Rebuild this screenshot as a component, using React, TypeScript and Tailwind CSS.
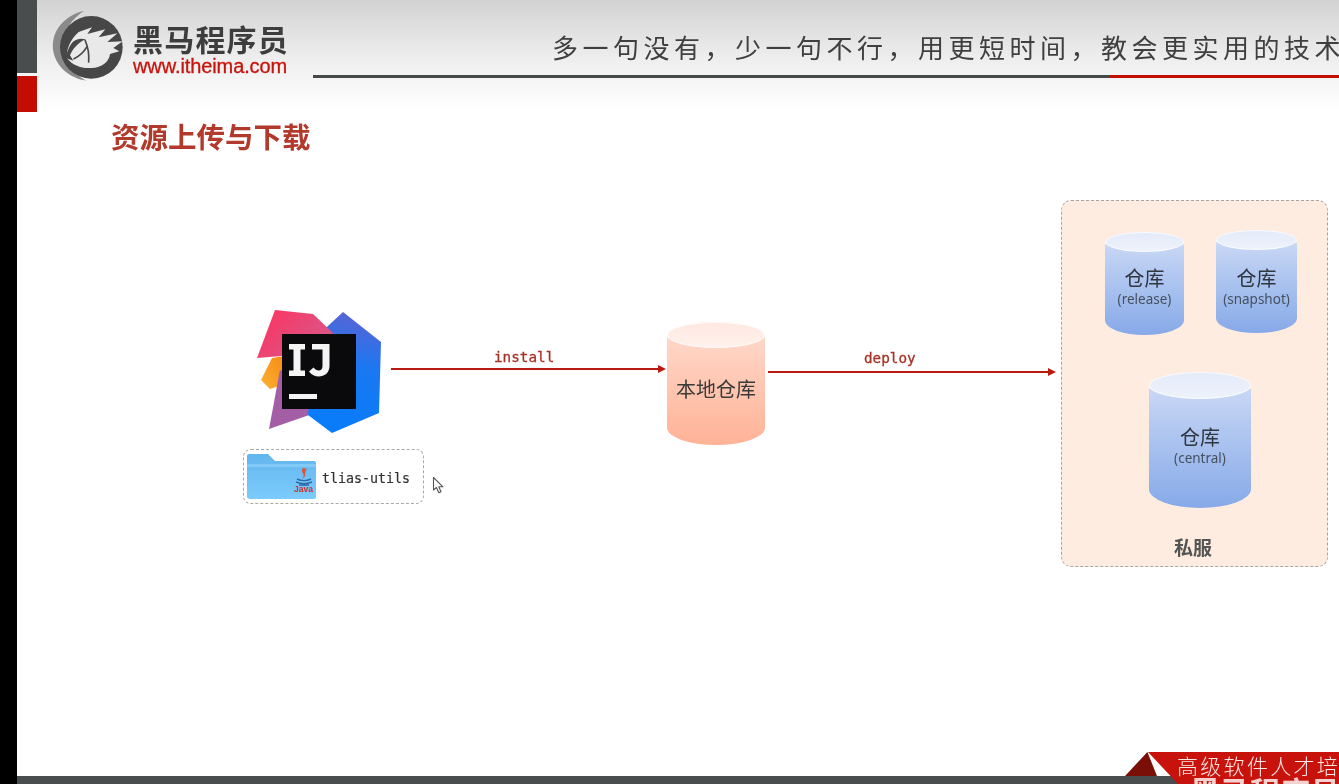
import React from 'react';

const cjkSans = "font-['Noto_Sans_CJK_SC','Noto_Sans',sans-serif]";
const mono = "font-['DejaVu_Sans_Mono','Liberation_Mono',monospace]";

type CylinderProps = {
  className: string;
  topClass: string;
  body: string;
  children: React.ReactNode;
};

const Cylinder = ({ className, topClass, body, children }: CylinderProps) => (
  <div className={`absolute rounded-[50%/14%] ${body} ${className}`}>
    <div className={`absolute left-0 top-0 w-full rounded-[50%] border border-white/80 ${topClass}`}></div>
    <div className="relative flex h-full w-full flex-col items-center justify-center">{children}</div>
  </div>
);

const RepoLabel = ({ sub, pad }: { sub: string; pad: string }) => (
  <div className={`flex flex-col items-center ${pad}`}>
    <div className={`${cjkSans} text-[20px] leading-[24px] text-[#2f3640]`}>仓库</div>
    <div className="font-['Noto_Sans',sans-serif] text-[13.5px] leading-[18px] text-[#46505f]">{sub}</div>
  </div>
);

const Arrow = ({ className }: { className: string }) => (
  <div className={`absolute flex items-center ${className}`}>
    <div className="h-[2px] flex-1 bg-[#b81a10]"></div>
    <div className="h-0 w-0 border-y-[4px] border-l-[8px] border-y-transparent border-l-[#b81a10]"></div>
  </div>
);

const HorseLogo = () => (
  <svg width="84" height="76" viewBox="0 0 252 228" className="shrink-0">
    <path d="M108 8 C50 22 6 70 16 130 C24 176 66 212 116 218 C70 194 38 152 42 110 C46 68 72 32 108 8Z" fill="#8a8a8a" />
    <circle cx="130" cy="118" r="94" fill="#474747" />
    <path d="M56 150 C56 122 66 96 92 72 L132 58 L118 78 L172 64 L152 88 L208 76 L178 102 L224 100 L196 120 L214 130 L186 138 C184 160 162 180 130 180 C100 182 74 172 56 150Z" fill="#e9e9e9" />
    <path d="M72 104 C62 118 56 134 52 150 L76 158 L66 142 C74 124 88 106 112 94 C98 90 82 94 72 104Z" fill="#474747" />
    <path d="M111 96 C119 114 124 136 122 162 M117 116 C109 130 96 144 78 152" stroke="#474747" strokeWidth="5" fill="none" strokeLinecap="round" />
  </svg>
);

const IdeaLogo = () => (
  <svg className="absolute left-[255px] top-[308px]" width="128" height="128" viewBox="0 0 128 128">
    <defs>
      <linearGradient id="ij-blue" x1="0.55" y1="1" x2="0.7" y2="0">
        <stop offset="0" stopColor="#087cfa" />
        <stop offset="0.55" stopColor="#1a78f2" />
        <stop offset="1" stopColor="#5b63d3" />
      </linearGradient>
      <linearGradient id="ij-red" x1="0" y1="0" x2="1" y2="0.6">
        <stop offset="0" stopColor="#fe315d" />
        <stop offset="1" stopColor="#d9588a" />
      </linearGradient>
      <linearGradient id="ij-orange" x1="0" y1="1" x2="1" y2="0">
        <stop offset="0" stopColor="#f9b233" />
        <stop offset="1" stopColor="#f98a12" />
      </linearGradient>
    </defs>
    <path d="M17 50 L6 72 L15 81 L30 76 L30 48Z" fill="url(#ij-orange)" />
    <path d="M25 62 L14 121 L60 105 L42 70Z" fill="#a35ea5" />
    <path d="M88 4 L126 34 L124 105 L77 125 L53 107 L60 30Z" fill="url(#ij-blue)" />
    <path d="M20 2 L58 6 L78 25 L60 50 L27 48 L2 50Z" fill="url(#ij-red)" />
    <rect x="27" y="26" width="74" height="75" fill="#0a0a0c" />
    <path d="M34 36 H50 V41.500 H45.500 V62.500 H50 V68 H34 V62.500 H38.500 V41.500 H34Z" fill="#f4f4f4" />
    <path d="M57 36 H74.500 V58 C74.500 65 69 68.500 64 68.500 C60 68.500 56.500 67 54 63.500 L58.500 59.500 C60 61.500 62 62.500 63.500 62.500 C66 62.500 67.500 61 67.500 58 V41.500 H57Z" fill="#f4f4f4" />
    <rect x="34" y="86" width="28" height="5" fill="#f4f4f4" />
  </svg>
);

const JavaFolder = () => (
  <div className="relative h-[45px] w-[69px] shrink-0">
    <svg width="69" height="45" viewBox="0 0 69 45" className="absolute left-0 top-0">
      <defs>
        <linearGradient id="folder" x1="0" y1="0" x2="0" y2="1">
          <stop offset="0" stopColor="#62b6ee" />
          <stop offset="1" stopColor="#7ccbfc" />
        </linearGradient>
      </defs>
      <path d="M2 0 H21 L28 7 H67 Q69 7 69 9 V43 Q69 45 67 45 H3 Q0 45 0 42 V2 Q0 0 2 0Z" fill="url(#folder)" />
      <path d="M0 10 H69 V13 H0Z" fill="#a3dcff" fillOpacity="0.45" />
      <path d="M56 14 C52 18 60 20 55 25 C61 22 56 19 60 15Z" fill="#d8563f" />
      <path d="M50 25 C54 27 60 27 64 25 M49 28 C54 30 60 30 65 28 M52 31 H62" stroke="#2f6aa8" strokeWidth="1.4" fill="none" />
    </svg>
    <span className="absolute bottom-[5px] right-[3px] font-['Liberation_Sans',sans-serif] text-[8.5px] font-bold leading-[9px] text-[#c8302a]">Java</span>
  </div>
);

const App = () => {
  return (
    <div className="relative flex h-[784px] w-[1339px] overflow-hidden bg-white blur-[0.4px]">
      <div className="w-[17px] shrink-0 bg-black"></div>

      <div className="flex min-w-0 flex-1 flex-col">
        <header className="flex h-[112px] shrink-0 bg-gradient-to-b from-[#d2d2d2] via-[#ededed] to-white">
          <div className="flex w-[20px] shrink-0 flex-col">
            <div className="h-[73px] bg-[#4a4d4e]"></div>
            <div className="mt-[3px] h-[36px] bg-[#c30d00]"></div>
          </div>
          <div className="flex h-[92px] w-[276px] shrink-0 items-center pl-[11px]">
            <HorseLogo />
            <div className="ml-[1px] flex flex-col pt-[4px]">
              <div className={`${cjkSans} text-[30px] font-bold leading-[36px] tracking-[1.2px] text-[#3d3d3d]`}>黑马程序员</div>
              <div className="font-['Liberation_Sans',sans-serif] text-[20px] leading-[20px] tracking-[-0.1px] text-[#c8130c] [-webkit-text-stroke:0.3px_#c8130c]">www.itheima.com</div>
            </div>
          </div>
          <div className="flex min-w-0 flex-1 flex-col overflow-hidden">
            <div className={`${cjkSans} h-[75px] whitespace-nowrap pl-[239px] pt-[28px] text-[26px] font-normal leading-[38px] tracking-[4.5px] text-[#3f3f3f]`}>
              多一句没有，少一句不行，用更短时间，教会更实用的技术
            </div>
            <div className="flex h-[3px]">
              <div className="w-[797px] bg-[#44494a]"></div>
              <div className="flex-1 bg-[#c30d00]"></div>
            </div>
          </div>
        </header>

        <h1 className={`${cjkSans} pl-[94px] pt-[5px] text-[28.5px] font-bold leading-[38px] text-[#b23a2c]`}>资源上传与下载</h1>

        <footer className="relative mt-auto h-[32px] shrink-0">
          <div className="absolute bottom-0 left-0 h-[8px] w-full bg-[#4a4d4e]"></div>
          <div className="absolute bottom-[8px] left-[1108px] h-[24px] w-[32px] bg-[#7a0f08] [clip-path:polygon(0_100%,70%_0,100%_100%)]"></div>
          <div className="absolute bottom-0 left-[1131px] h-[32px] w-[191px] overflow-hidden bg-[#c8130c] [clip-path:polygon(0_0,100%_0,100%_100%,30px_100%)]">
            <div className={`${cjkSans} absolute left-[29px] top-[0px] whitespace-nowrap text-[21px] font-light leading-[26px] tracking-[2.3px] text-[#fde8e4]`}>高级软件人才培</div>
            <div className={`${cjkSans} absolute left-[42px] top-[20px] whitespace-nowrap text-[30px] font-bold leading-[36px] text-white/80`}>黑马程序员</div>
          </div>
        </footer>
      </div>

      {/* diagram canvas, nodes sit at their own coordinates */}
      <div className="absolute inset-0">
        <IdeaLogo />

        <div className="absolute left-[243px] top-[449px] flex h-[55px] w-[181px] items-center rounded-[8px] border border-dashed border-[#a8a8a8] pl-[3px]">
          <JavaFolder />
          <span className={`${mono} ml-[6px] pt-[4px] text-[13.3px] text-[#333333] [-webkit-text-stroke:0.2px_#333333]`}>tlias-utils</span>
        </div>

        <svg className="absolute left-[432px] top-[476px]" width="13" height="19" viewBox="0 0 13 19">
          <path d="M1.5 1.5 V14 L4.5 11.5 L6.8 16.8 L9 15.8 L6.8 10.8 H11Z" fill="#ffffff" stroke="#555555" strokeWidth="1.1" strokeLinejoin="round" />
        </svg>

        <Arrow className="left-[391px] top-[365px] h-[8px] w-[275px]" />
        <div className={`${mono} absolute left-[494px] top-[349px] text-[14.3px] leading-[17px] text-[#a83226] [-webkit-text-stroke:0.3px_#a83226]`}>install</div>

        <Cylinder
          className="left-[667px] top-[322px] h-[123px] w-[98px]"
          topClass="h-[26px] bg-gradient-to-b from-[#ffe8e1] to-[#fff1ec]"
          body="bg-gradient-to-b from-[#ffdccf] to-[#ffb296]"
        >
          <div className={`${cjkSans} pt-[10px] text-[20px] leading-[24px] text-[#3a3a3a]`}>本地仓库</div>
        </Cylinder>

        <Arrow className="left-[768px] top-[368px] h-[8px] w-[288px]" />
        <div className={`${mono} absolute left-[864px] top-[350px] text-[14.3px] leading-[17px] text-[#a83226] [-webkit-text-stroke:0.3px_#a83226]`}>deploy</div>

        <div className="absolute left-[1061px] top-[200px] h-[367px] w-[267px] rounded-[10px] border border-dashed border-[#a5a5a5] bg-[#fdecdf]"></div>

        <Cylinder
          className="left-[1105px] top-[232px] h-[103px] w-[79px]"
          topClass="h-[20px] bg-gradient-to-b from-[#e4ebf9] to-[#edf2fb]"
          body="bg-gradient-to-b from-[#d2def6] to-[#86a9e8]"
        >
          <RepoLabel sub="(release)" pad="pt-[6px]" />
        </Cylinder>
        <Cylinder
          className="left-[1216px] top-[230px] h-[103px] w-[81px]"
          topClass="h-[20px] bg-gradient-to-b from-[#e4ebf9] to-[#edf2fb]"
          body="bg-gradient-to-b from-[#d2def6] to-[#86a9e8]"
        >
          <RepoLabel sub="(snapshot)" pad="pt-[10px]" />
        </Cylinder>
        <Cylinder
          className="left-[1149px] top-[372px] h-[136px] w-[102px]"
          topClass="h-[27px] bg-gradient-to-b from-[#e4ebf9] to-[#edf2fb]"
          body="bg-gradient-to-b from-[#d2def6] to-[#86a9e8]"
        >
          <RepoLabel sub="(central)" pad="pt-[12px]" />
        </Cylinder>

        <div className={`${cjkSans} absolute left-[1174px] top-[534px] text-[19px] font-bold leading-[26px] text-[#555555]`}>私服</div>
      </div>
    </div>
  );
};

export default App;
